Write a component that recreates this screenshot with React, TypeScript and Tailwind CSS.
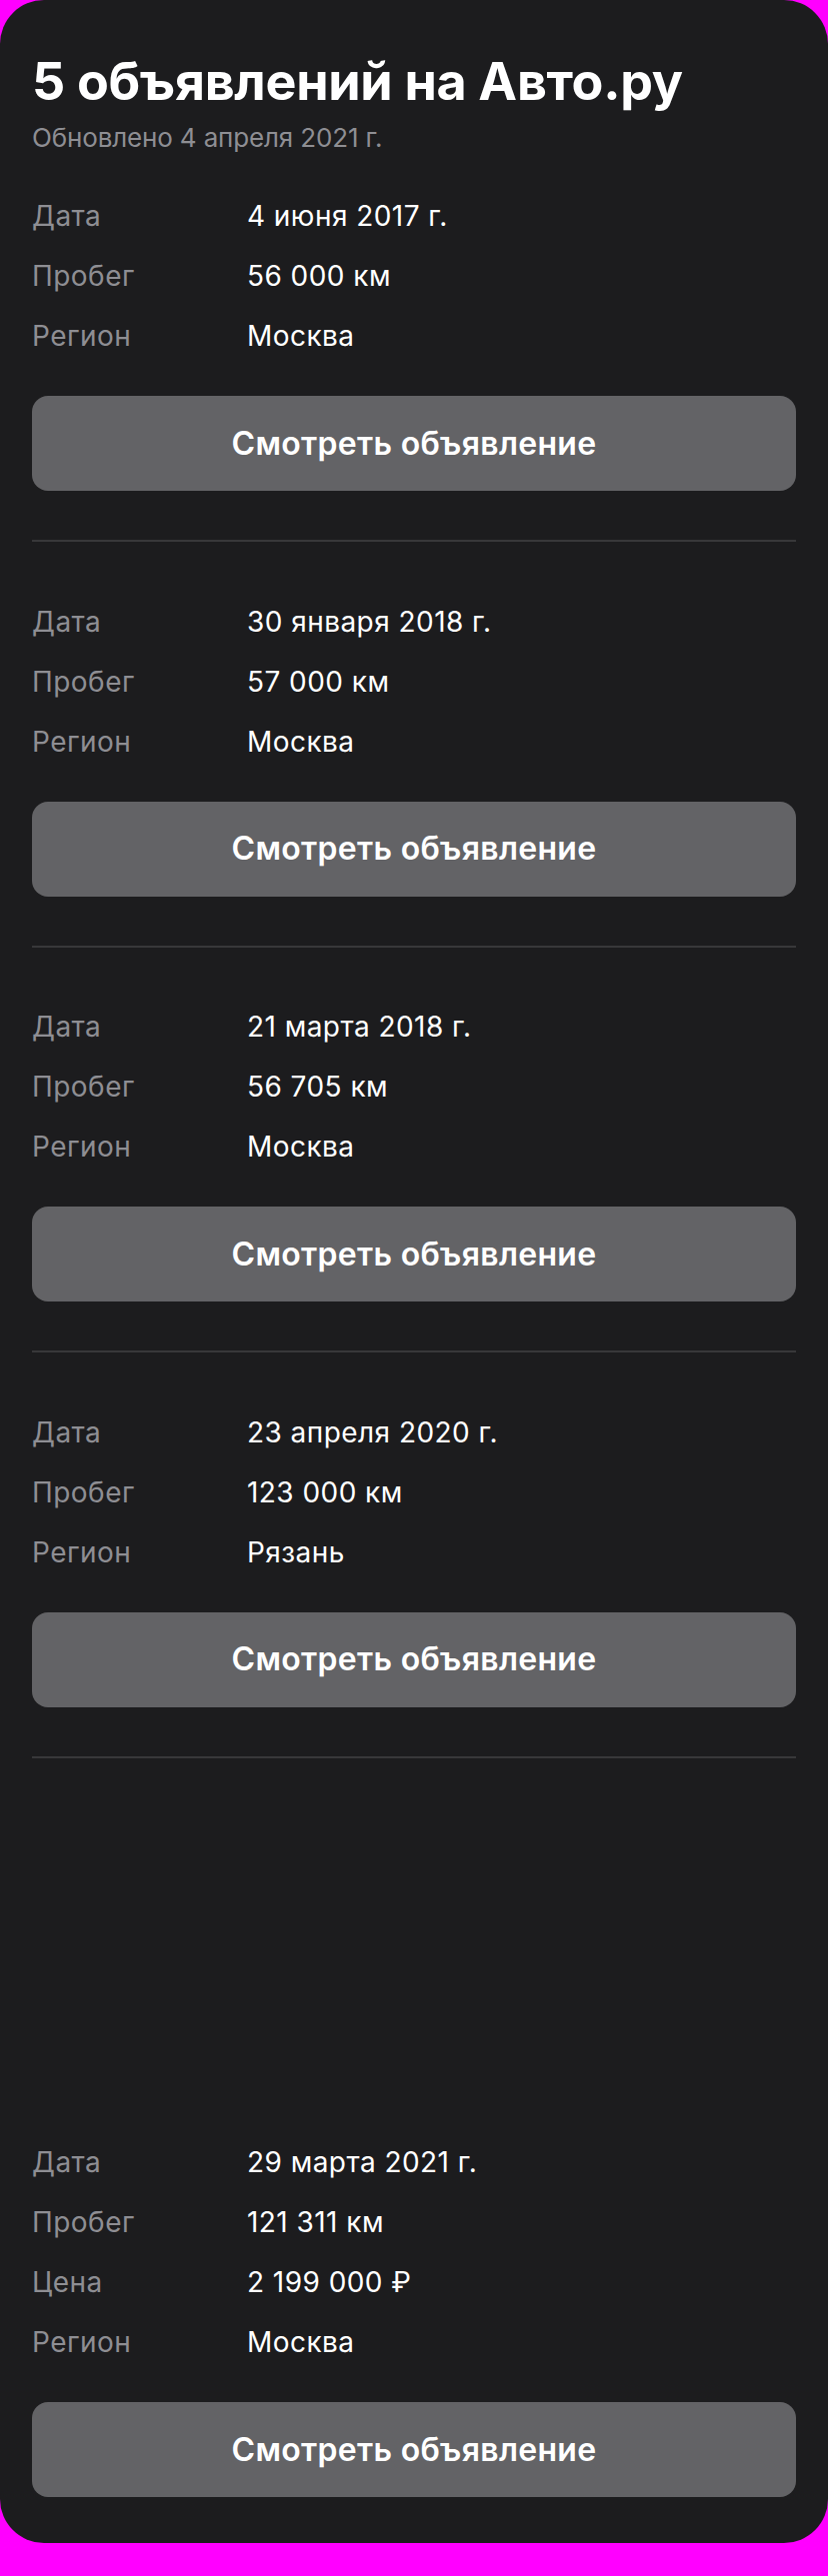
const listings = [
  {
    id: 1,
    rows: [
      { label: 'Дата', value: '4 июня 2017 г.' },
      { label: 'Пробег', value: '56 000 км' },
      { label: 'Регион', value: 'Москва' },
    ],
  },
  {
    id: 2,
    rows: [
      { label: 'Дата', value: '30 января 2018 г.' },
      { label: 'Пробег', value: '57 000 км' },
      { label: 'Регион', value: 'Москва' },
    ],
  },
  {
    id: 3,
    rows: [
      { label: 'Дата', value: '21 марта 2018 г.' },
      { label: 'Пробег', value: '56 705 км' },
      { label: 'Регион', value: 'Москва' },
    ],
  },
  {
    id: 4,
    rows: [
      { label: 'Дата', value: '23 апреля 2020 г.' },
      { label: 'Пробег', value: '123 000 км' },
      { label: 'Регион', value: 'Рязань' },
    ],
  },
  {
    id: 5,
    hasPhoto: true,
    rows: [
      { label: 'Дата', value: '29 марта 2021 г.' },
      { label: 'Пробег', value: '121 311 км' },
      { label: 'Цена', value: '2 199 000 ₽' },
      { label: 'Регион', value: 'Москва' },
    ],
  },
];

type Listing = (typeof listings)[number];

function ListingBlock({ listing, first }: { listing: Listing; first: boolean }) {
  return (
    <div className={first ? 'pt-[45px]' : 'pt-[62.5px]'}>
      {listing.hasPhoto && <div className="h-[325px]" />}

      <div className="flex flex-col gap-[26px]">
        {listing.rows.map((row) => (
          <div
            key={row.label}
            className="grid grid-cols-[215px_1fr] text-[28px] leading-[34px] tracking-[0.45px]"
          >
            <span className="text-[#8e8e93]">{row.label}</span>
            <span className="text-white">{row.value}</span>
          </div>
        ))}
      </div>

      <button
        type="button"
        className="mt-[43px] flex h-[95px] w-full items-center justify-center rounded-[16px] bg-[#636366] text-[32px] font-semibold tracking-[0.3px] text-white"
      >
        Смотреть объявление
      </button>
    </div>
  );
}

export default function App() {
  return (
    <div className="min-h-[2577px] bg-[#f0f] pb-[34px] font-['Inter','Noto_Sans',sans-serif]">
      <div className="rounded-[44px] bg-[#1c1c1e] px-[32px] pt-[50px] pb-[46px]">
        {/* Header */}
        <h1 className="text-[52px] font-bold leading-[64px] tracking-[-0.3px] text-white">
          5 объявлений на Авто.ру
        </h1>
        <p className="mt-[8px] text-[26px] leading-[32px] tracking-[-0.15px] text-[#8e8e93]">
          Обновлено 4 апреля 2021 г.
        </p>

        {listings.map((listing, i) => (
          <div key={listing.id}>
            {i > 0 && <div className="h-[2px] bg-[#38383a]" />}
            <ListingBlock listing={listing} first={i === 0} />
            {i < listings.length - 1 && <div className="h-[49px]" />}
          </div>
        ))}
      </div>
    </div>
  );
}
